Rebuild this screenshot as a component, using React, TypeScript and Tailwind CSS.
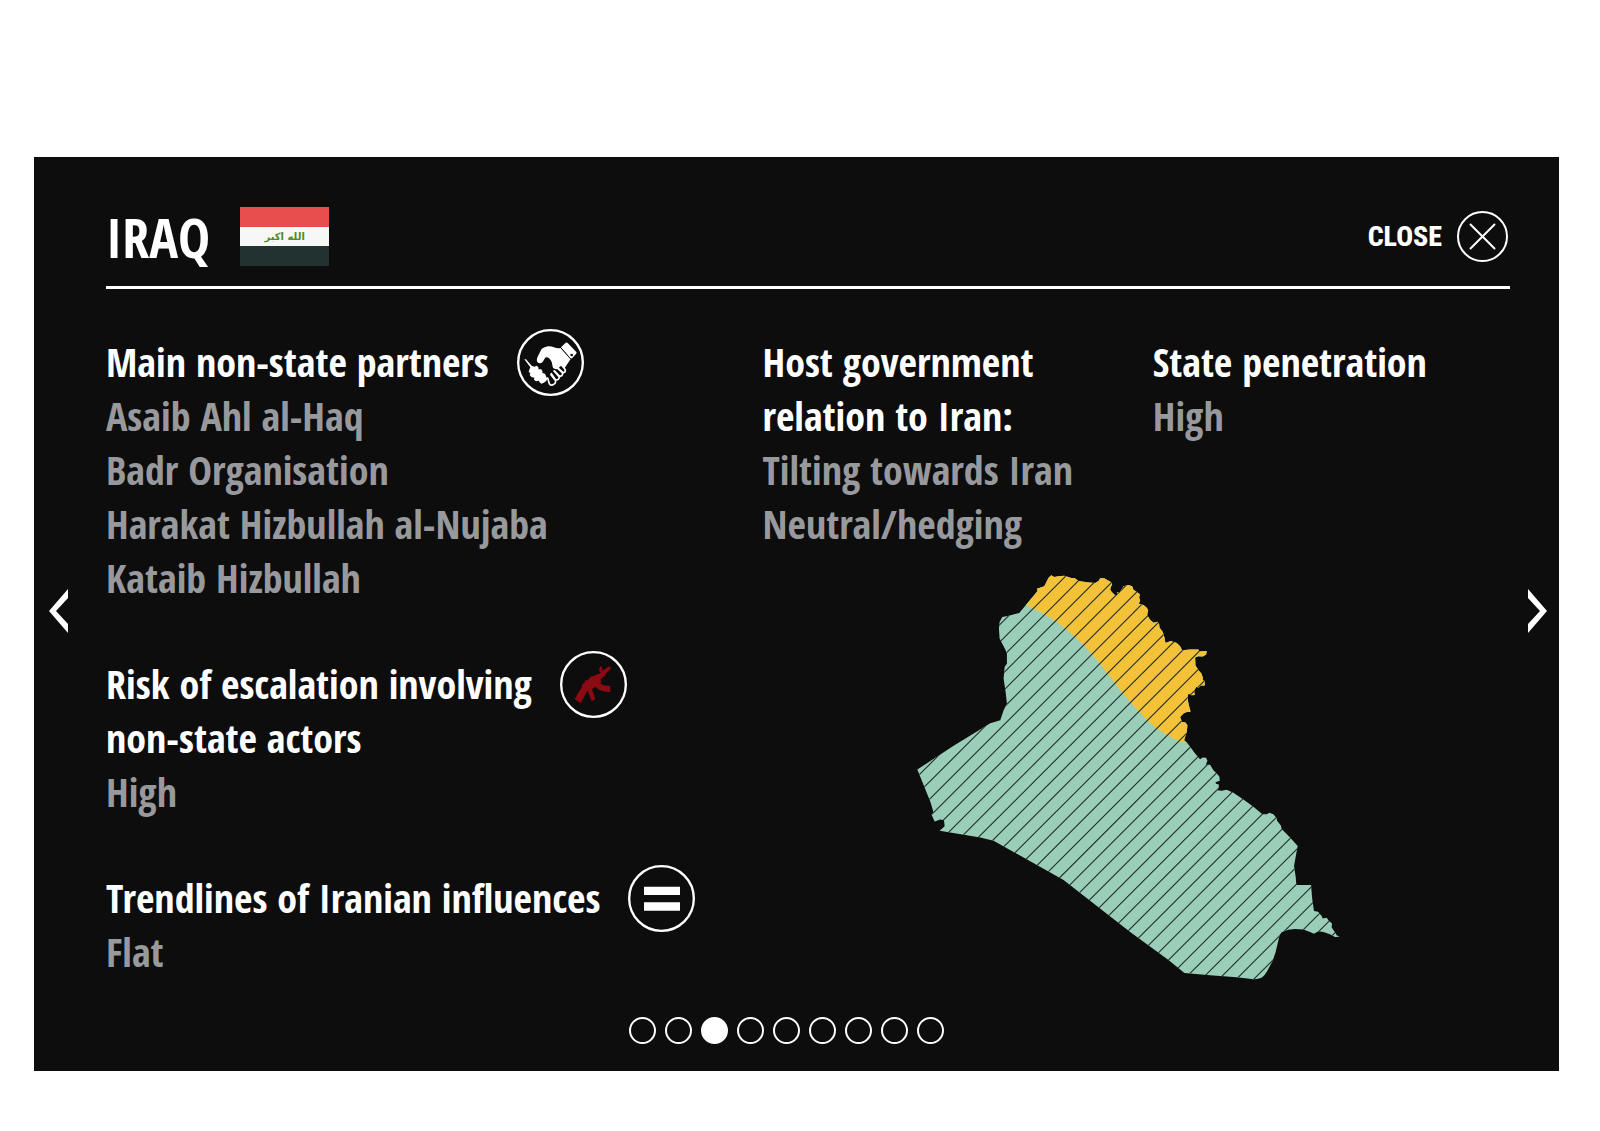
import type { ReactNode } from "react";

const HATCH_LINES = Array.from({ length: 40 }, (_, i) => 617 + 52.2 * (i - 8));

const NORTH_EAST =
  "M137 134L172 92L170 85L192 78L205 52L213 45L222 50L235 48L252 46L264 50L275 54L283 53L295 62L320 66L345 68L355 62L360 54L372 54L392 65L396 72L392 80L390 88L395 95L404 104L412 104L410 95L418 98L430 78L445 74L456 78L460 88L470 95L479 102L477 112L480 120L476 130L490 134L500 142L504 150L501 165L510 178L520 187L532 184L537 192L538 202L548 215L553 232L556 248L572 242L590 248L600 258L606 270L630 268L655 268L657 274L680 272L678 283L668 289L655 288L645 292L646 315L655 330L664 340L668 352L668 360L674 362L674 376L662 376L656 382L648 380L642 392L644 404L634 405L625 400L622 412L625 430L628 442L632 455L620 455L610 460L600 470L606 485L616 487L622 495L620 515L612 540L622 549";
const DIVIDE =
  "C585 541 555 522 530 505C495 476 470 447 450 425C425 396 403 367 383 342C367 321 350 298 333 280C316 260 300 244 282 228C264 211 245 196 225 182C200 165 168 147 137 134Z";
const SOUTH_WEST =
  "L630 560L645 580L653 590L660 597L668 592L678 593L682 602L677 614L690 614L700 630L712 642L718 650L719 662L706 666L708 671L716 673L716 682L712 690L725 692L740 689L760 698L790 718L820 740L847 762L860 762L868 758L880 762L890 774L891 782L902 795L905 807L930 832L953 858L947 890L942 918L947 950L949 975L993 975L997 1020L1002 1053L1014 1055L1025 1068L1028 1075L1040 1073L1047 1083L1056 1090L1055 1102L1064 1115L1070 1126L1079 1130L1065 1131L1050 1123L1030 1116L1015 1114L1002 1121L990 1116L970 1108L945 1107L925 1109L905 1117L899 1125L893 1150L887 1175L878 1202L862 1232Q850 1252 842 1254Q832 1258 820 1258L770 1252L690 1246L613 1239L565 1200L450 1116L250 960L40 842L0 832L-122 812L-107 798L-109 780L-120 778L-137 784L-147 762L-140 758L-150 725L-189 628L-80 557L30 489L60 480L70 450L80 430L76 395L70 355L73 320L80 310L80 280L75 268L58 235L56 205L58 185L66 170L85 166L117 158Z";

function IraqMap() {
  return (
    <svg viewBox="-190 44 1270 1216" className="h-auto w-full" role="img" aria-label="Map of Iraq by relation to Iran">
      <defs>
        <clipPath id="iraq">
          <path d={NORTH_EAST + SOUTH_WEST} />
        </clipPath>
      </defs>
      <path d={NORTH_EAST + SOUTH_WEST} fill="#9bceb8" />
      <path d={NORTH_EAST + DIVIDE} fill="#f4c238" />
      <g clipPath="url(#iraq)" stroke="#1c2b26" strokeWidth="3.2">
        {HATCH_LINES.map((c) => (
          <path key={c} d={`M${c} 0L${c - 1300} 1300`} />
        ))}
      </g>
    </svg>
  );
}

function Badge({ label, children }: { label: string; children: ReactNode }) {
  return (
    <svg viewBox="0 0 201 201" className="-mt-1.5 -mb-3 size-[67px] shrink-0" role="img" aria-label={label}>
      <circle cx="100.5" cy="100.5" r="97" fill="none" stroke="#fff" strokeWidth="7" />
      {children}
    </svg>
  );
}

function Handshake() {
  return (
    <Badge label="Handshake">
      <g fill="#fff" transform="translate(-42 -29)">
        <path d="M102 126C101 121 102 116 104 112L114 92C117 86 123 84 130 82C138 79 146 81 153 84C160 87 166 88 173 86L203 119L185 146L188 151L182 160L150 146L146 128C142 118 134 112 128 114C124 118 122 126 118 129C112 134 104 132 102 126Z" />
        <path d="M174 84L188 70Q191 68 194 71L220 98Q222 101 219 104L207 117Q204 119 201 116Z" />
        <circle cx="206" cy="107" r="4" fill="#0d0d0d" />
        <path d="M174 86L203 119" stroke="#0d0d0d" strokeWidth="3" />
        <path d="M64 120L69 120L86 139L94 142L102 139L107 146L106 150L115 150L119 157L118 161L126 163L129 171L133 178L129 186L121 191L115 193L109 188L108 184L99 186L93 181L94 175L85 173L80 167L82 162L77 157L80 148L82 144Z" />
      </g>
      <g transform="translate(-42 -29)" fill="#0d0d0d" stroke="#fff" strokeWidth="5" strokeLinecap="round" strokeLinejoin="round">
        <path d="M166 147L180 160Q187 160 187 151L176 138" />
        <path d="M155 155L170 171Q179 171 179 161L164 147" />
        <path d="M145 163L158 182Q168 183 169 173L153 155" />
        <path d="M134 176L139 193Q146 203 157 191L158 184L144 166" />
      </g>
    </Badge>
  );
}

function Rifle() {
  return (
    <Badge label="Rifle">
      <g transform="translate(-36 -36)" fill="#8c0a12">
        <path d="M80 181L90 163L102 144L102 136L110 131L111 124L119 124L130 112L141 110L148 105L156 104L172 109L157 122L161 127L152 138L137 147L129 153L117 157L110 171L98 193Z" />
        <path d="M118 152L131 148L142 180L131 187Z" />
        <path d="M143 134L155 129L160 136Q171 142 187 141L187 159Q162 160 145 146Z" />
        <path d="M154 105L160 98L183 82L190 88L172 105L173 110L163 112Z" />
        <path d="M156 100L153 92L157 82L162 84L164 97Z" />
      </g>
    </Badge>
  );
}

function Equals() {
  return (
    <Badge label="Flat trend">
      <path fill="#fff" d="M48 65h108v25h-108zM48 112h108v25h-108z" />
    </Badge>
  );
}

function Fact({ title, values, icon }: { title: string[]; values: string[]; icon?: ReactNode }) {
  return (
    <section>
      <div className="flex items-start gap-7">
        <h2 className="text-white">
          {title.map((line) => (
            <span key={line} className="block whitespace-nowrap">
              {line}
            </span>
          ))}
        </h2>
        {icon}
      </div>
      <ul>
        {values.map((value) => (
          <li key={value}>{value}</li>
        ))}
      </ul>
    </section>
  );
}

export default function App() {
  return (
    <main className="min-h-screen bg-white pt-[157px] pr-[41px] pb-[59px] pl-[34px]">
      <article className="flex items-center bg-[#0d0d0d] font-['Open_Sans_Condensed','Roboto_Condensed',sans-serif] font-bold text-white">
        <button type="button" aria-label="Previous country" className="mb-1.5 flex w-[72px] shrink-0 pl-[15px]">
          <svg viewBox="0 0 19 44" className="h-11 w-[19px]" fill="#fff">
            <path d="M19 0V9L7 22L19 35V44L0 22Z" />
          </svg>
        </button>

        <div className="min-w-0 flex-1 pt-[50px] pb-[27px]">
          <header className="flex items-center justify-between border-b-[3px] border-white pb-5">
            <div className="flex items-center gap-[30px]">
              <h1 className="text-[54px] leading-[56px]">IRAQ</h1>
              <div className="flex h-[59px] w-[89px] flex-col" role="img" aria-label="Flag of Iraq">
                <div className="flex-1 bg-[#e94e4e]" />
                <div className="flex flex-1 items-center justify-center bg-[#f6f8f8] font-['DejaVu_Sans',sans-serif] text-[10px] leading-none text-[#4f8a1c]">
                  <span dir="rtl" lang="ar">
                    الله اكبر
                  </span>
                </div>
                <div className="flex-1 bg-[#223230]" />
              </div>
            </div>
            <button
              type="button"
              className="flex items-center gap-[15px] pr-0.5 font-['Roboto_Condensed',sans-serif] text-[28px] leading-none font-extrabold"
            >
              CLOSE
              <svg viewBox="0 0 51 51" className="size-[51px]" fill="none" stroke="#fff" strokeWidth="2">
                <circle cx="25.5" cy="25.5" r="24.5" />
                <path d="M13.5 13.5L37.5 37.5M37.5 13.5L13.5 37.5" strokeLinecap="round" />
              </svg>
            </button>
          </header>

          <div className="grid grid-cols-[656fr_747fr] pt-[46px] text-[40px] leading-[54px] text-[#98999d]">
            <div className="flex min-w-0 flex-col gap-[52px]">
              <Fact
                title={["Main non-state partners"]}
                values={["Asaib Ahl al-Haq", "Badr Organisation", "Harakat Hizbullah al-Nujaba", "Kataib Hizbullah"]}
                icon={<Handshake />}
              />
              <Fact title={["Risk of escalation involving", "non-state actors"]} values={["High"]} icon={<Rifle />} />
              <Fact title={["Trendlines of Iranian influences"]} values={["Flat"]} icon={<Equals />} />
            </div>
            <div className="min-w-0">
              <div className="grid grid-cols-[390fr_357fr]">
                <Fact title={["Host government", "relation to Iran:"]} values={["Tilting towards Iran", "Neutral/hedging"]} />
                <Fact title={["State penetration"]} values={["High"]} />
              </div>
              <div className="mt-6 ml-[155px] max-w-[423px]">
                <IraqMap />
              </div>
            </div>
          </div>

          <nav aria-label="Countries" className="mt-[37px] flex justify-center gap-[9px] pr-11">
            {Array.from({ length: 9 }, (_, i) => (
              <button
                key={i}
                type="button"
                aria-label={`Country ${i + 1}`}
                aria-current={i === 2}
                className="size-[27px] rounded-full border-2 border-white aria-[current=true]:bg-white"
              />
            ))}
          </nav>
        </div>

        <button type="button" aria-label="Next country" className="mb-1.5 flex w-[49px] shrink-0 justify-end pr-3">
          <svg viewBox="0 0 19 44" className="h-11 w-[19px]" fill="#fff">
            <path d="M0 0V9L12 22L0 35V44L19 22Z" />
          </svg>
        </button>
      </article>
    </main>
  );
}
